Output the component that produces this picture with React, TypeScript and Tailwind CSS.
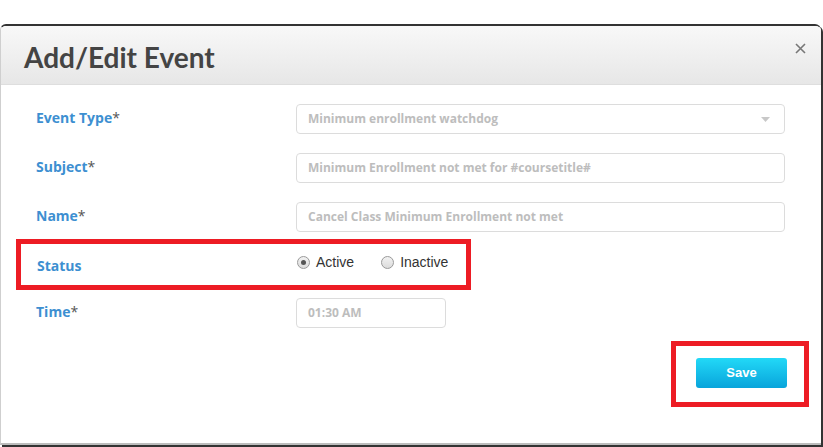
import React from 'react';

const labelCls =
  "w-[260px] shrink-0 -mt-[3px] text-[14px] font-bold text-[#3d8fd1] font-['Open_Sans',sans-serif]";
const fieldCls =
  "h-[30px] rounded-[4px] border border-[#dcdcdc] bg-white px-[11px] flex items-center text-[12px] font-bold text-[#bdbdbd] font-['Open_Sans',sans-serif]";

const Label: React.FC<{ text: string; required?: boolean }> = ({ text, required }) => (
  <div className={labelCls}>
    {text}
    {required && <span className="font-normal text-[#555]">*</span>}
  </div>
);

const Radio: React.FC<{ checked?: boolean; label: string }> = ({ checked, label }) => (
  <label className="flex items-center gap-[6px]">
    <span className="flex h-[13px] w-[13px] items-center justify-center rounded-full border border-[#9a9a9a] bg-gradient-to-b from-[#f2f2f2] to-[#dcdcdc]">
      {checked && <span className="h-[5px] w-[5px] rounded-full bg-[#555]" />}
    </span>
    <span className="text-[14px] text-[#333] font-['Liberation_Sans',Arial,sans-serif]">{label}</span>
  </label>
);

const App: React.FC = () => {
  return (
    <div className="h-[447px] w-[823px] overflow-hidden bg-white">
      <div className="h-[24px]" />
      <div className="mr-[2px] flex h-[421px] flex-col overflow-hidden rounded-t-[6px] border-t-2 border-l border-[#333] border-l-[#cfcfcf] border-b-2 border-b-[#bdbdbd] shadow-[2px_2px_0_#333]">
        <header className="flex h-[59px] shrink-0 items-center justify-between border-b border-[#dedede] bg-gradient-to-b from-[#f8f8f8] to-[#e7e7e7] pl-[23px] pr-[15px]">
          <h1 className="pt-[4px] text-[28px] font-bold text-[#444] font-['Lato',sans-serif]">Add/Edit Event</h1>
          <button className="mb-[14px] text-[#777]">
            <svg width="11" height="11" viewBox="0 0 11 11">
              <path d="M1 1L10 10M10 1L1 10" stroke="#777" strokeWidth="1.6" />
            </svg>
          </button>
        </header>

        <div className="flex flex-1 flex-col bg-white pl-[35px] pr-[35px] pt-[19px]">
          <div className="flex items-center">
            <Label text="Event Type" required />
            <div className={`${fieldCls} w-[489px] justify-between`}>
              <span>Minimum enrollment watchdog</span>
              <svg width="9" height="5" viewBox="0 0 9 5" className="mr-[3px]">
                <path d="M0 0H9L4.5 5Z" fill="#c8c8c8" />
              </svg>
            </div>
          </div>

          <div className="mt-[19px] flex items-center">
            <Label text="Subject" required />
            <div className={`${fieldCls} w-[489px]`}>Minimum Enrollment not met for #coursetitle#</div>
          </div>

          <div className="mt-[19px] flex items-center">
            <Label text="Name" required />
            <div className={`${fieldCls} w-[489px]`}>Cancel Class Minimum Enrollment not met</div>
          </div>

          <div className="-ml-[20px] mt-[7px] flex h-[51px] w-[455px] items-center border-[5px] border-[#ed1c24] pl-[16px]">
            <div className="pt-[4px]">
              <Label text="Status" />
            </div>
            <div className="-mt-[5px] flex items-center gap-[27px]">
              <Radio checked label="Active" />
              <Radio label="Inactive" />
            </div>
          </div>

          <div className="mt-[8px] flex items-center">
            <Label text="Time" required />
            <div className={`${fieldCls} w-[150px]`}>01:30 AM</div>
          </div>

          <div className="-mr-[23px] mt-[13px] flex justify-end">
            <div className="border-[5px] border-[#ed1c24] pb-[14px] pl-[20px] pr-[17px] pt-[12px]">
              <button className="h-[30px] w-[91px] rounded-[3px] bg-gradient-to-b from-[#22d9f7] to-[#08a4db] text-[13px] font-bold text-white font-['Liberation_Sans',Arial,sans-serif]">
                Save
              </button>
            </div>
          </div>
        </div>
      </div>
    </div>
  );
};

export default App;
